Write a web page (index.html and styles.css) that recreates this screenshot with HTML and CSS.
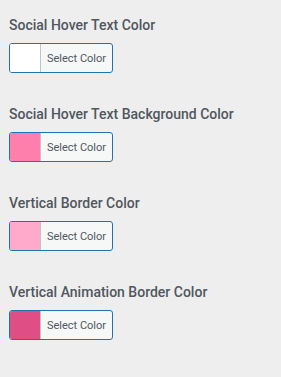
FILE: index.html
```html
<!DOCTYPE html>
<html lang="en">
<head>
    <meta charset="UTF-8">
    <meta name="viewport" content="width=device-width, initial-scale=1.0">
    <title>Color Settings</title>
    <link rel="stylesheet" href="styles.css">
</head>
<body>
    <div class="settings">
        <div class="field">
            <h3 class="field-title">Social Hover Text Color</h3>
            <button type="button" class="color-btn">
                <span class="swatch swatch-white"></span>
                <span class="color-label">Select Color</span>
            </button>
        </div>

        <div class="field">
            <h3 class="field-title">Social Hover Text Background Color</h3>
            <button type="button" class="color-btn">
                <span class="swatch swatch-pink"></span>
                <span class="color-label">Select Color</span>
            </button>
        </div>

        <div class="field">
            <h3 class="field-title">Vertical Border Color</h3>
            <button type="button" class="color-btn">
                <span class="swatch swatch-light"></span>
                <span class="color-label">Select Color</span>
            </button>
        </div>

        <div class="field">
            <h3 class="field-title">Vertical Animation Border Color</h3>
            <button type="button" class="color-btn">
                <span class="swatch swatch-deep"></span>
                <span class="color-label">Select Color</span>
            </button>
        </div>
    </div>
</body>
</html>
```

FILE: styles.css
```css
body {
    margin: 0;
    background: #eeeeee;
    font-family: Roboto, "Noto Sans", sans-serif;
    color: #50575e;
}

.settings {
    padding: 16px 9px 0;
    display: flex;
    flex-direction: column;
    gap: 32px;
}

.field {
    display: flex;
    flex-direction: column;
    align-items: flex-start;
    gap: 8px;
}

.field-title {
    margin: 0;
    font-size: 14px;
    font-weight: 500;
    line-height: 19px;
    color: #50575e;
}

.color-btn {
    display: flex;
    align-items: stretch;
    width: 104px;
    height: 30px;
    padding: 0;
    border: 1px solid #2271b1;
    border-radius: 3px;
    background: #f6f7f7;
    overflow: hidden;
    cursor: pointer;
    font-family: inherit;
}

.swatch {
    width: 30px;
    border-right: 1px solid #c3c4c7;
}

.swatch-white { background: #ffffff; }
.swatch-pink { background: #ff7fac; }
.swatch-light { background: #ffaacb; }
.swatch-deep { background: #df4f85; }

.color-label {
    flex: 1;
    display: flex;
    align-items: center;
    justify-content: center;
    font-size: 11px;
    color: #50575e;
}
```
